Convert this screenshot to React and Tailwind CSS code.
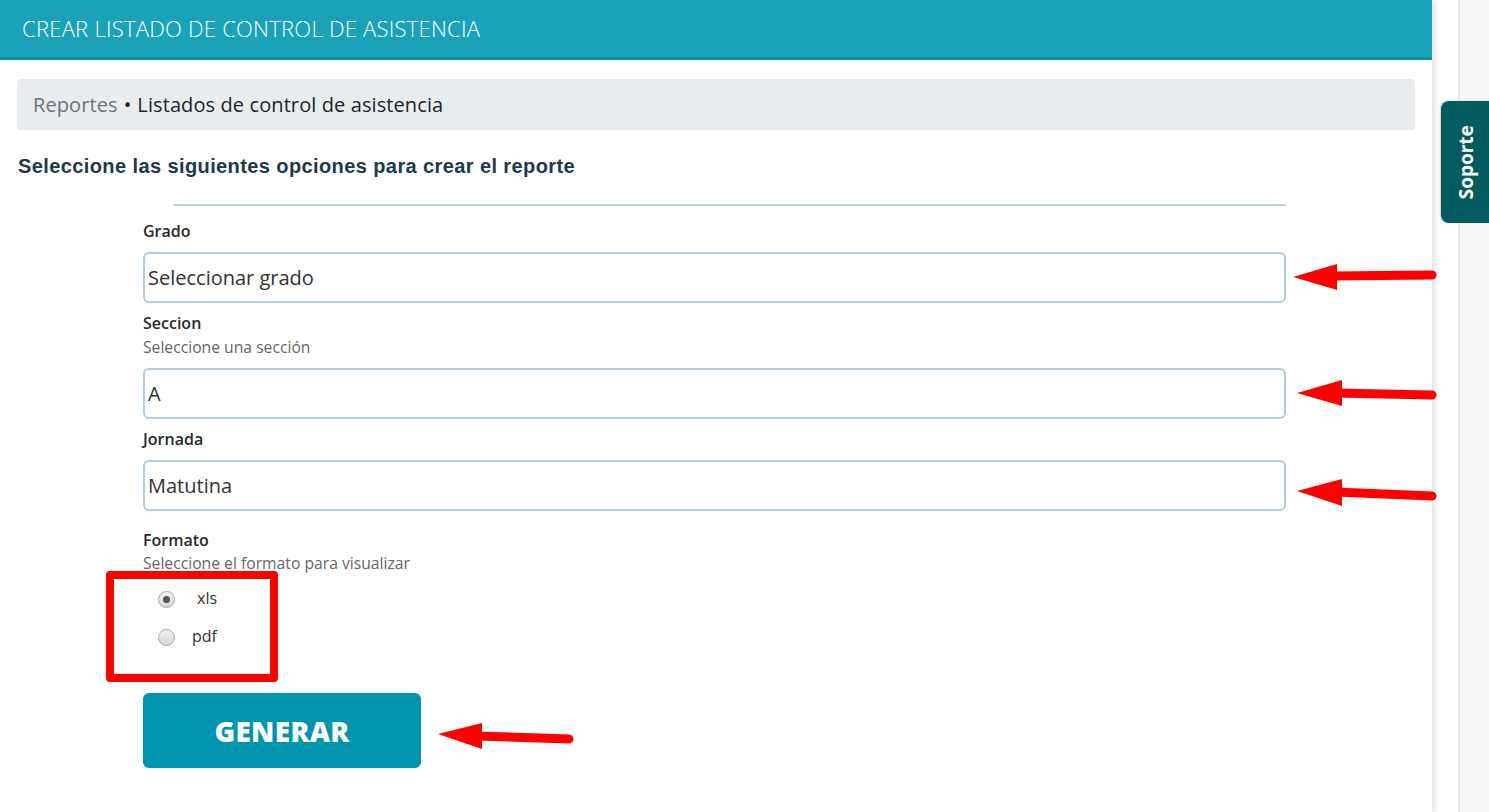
import React from "react";

function Radio({ checked }) {
  return (
    <span className="relative inline-flex h-[17px] w-[17px] items-center justify-center rounded-full border border-[#a8a8a8] bg-gradient-to-b from-[#f4f4f4] to-[#d6d6d6]">
      {checked && <span className="h-[7px] w-[7px] rounded-full bg-[#555]" />}
    </span>
  );
}

function Field({ label, help, value }) {
  return (
    <div className="flex flex-col">
      <div className="text-[16px] font-semibold leading-[20px] text-[#2a2a2a]">{label}</div>
      {help && <div className="mt-[4px] text-[15.7px] leading-[20px] text-[#666]">{help}</div>}
      <div className="mt-[11px] flex h-[51px] items-center rounded-[6px] border-2 border-[#acd0e5] px-[3px] text-[20px] text-[#333]">
        {value}
      </div>
    </div>
  );
}

export default function App() {
  return (
    <div className="relative flex h-[812px] w-[1489px] overflow-hidden bg-white" style={{ fontFamily: "'Open Sans', Lato, sans-serif" }}>
      <div className="relative z-10 flex w-[1432px] flex-col bg-white shadow-[3px_0_6px_rgba(0,0,0,0.12)]">
        <div className="flex h-[60px] items-center border-b-[3px] border-[#168b9d] bg-[#1aa3b8] px-[22px]">
          <span className="text-[22px] font-light tracking-[0.25px] text-white">CREAR LISTADO DE CONTROL DE ASISTENCIA</span>
        </div>
        <div className="px-[17px] pt-[19px]">
          <div className="flex h-[51px] items-center rounded-[4px] bg-[#e9ecef] px-[16px] text-[20px] tracking-[0.1px]">
            <span className="text-[#6c757d]">Reportes</span>
            <span className="mx-[6px] text-[#212529]">•</span>
            <span className="text-[#212529]">Listados de control de asistencia</span>
          </div>
        </div>
        <div className="mt-[21px] px-[18px] text-[20px] font-bold tracking-[0.4px] text-[#1b3a4b]" style={{ fontFamily: "'Liberation Sans', Arial, sans-serif" }}>
          Seleccione las siguientes opciones para crear el reporte
        </div>
        <div className="ml-[173px] mt-[23px] h-[2px] w-[1113px] bg-[#b7d6e8]" />
        <div className="ml-[143px] mt-[15px] flex w-[1143px] flex-col gap-[10px]">
          <Field label="Grado" value="Seleccionar grado" />
          <Field label="Seccion" help="Seleccione una sección" value="A" />
          <Field label="Jornada" value="Matutina" />
        </div>
        <div className="ml-[143px] mt-[19px] flex flex-col">
          <div className="text-[16px] font-semibold leading-[20px] text-[#2a2a2a]">Formato</div>
          <div className="mt-[4px] text-[15.7px] leading-[18px] text-[#666]">Seleccione el formato para visualizar</div>
        </div>
        <div className="ml-[106px] -mt-[1px] flex h-[111px] w-[172px] flex-col rounded-[4px] border-[8px] border-[#ff0000] pl-[44px] pt-[10px]">
          <div className="flex h-[20px] items-center gap-[22px] text-[16px] text-[#333]">
            <Radio checked />
            <span className="-mt-[3px]">xls</span>
          </div>
          <div className="mt-[18px] flex h-[20px] items-center gap-[17px] text-[16px] text-[#333]">
            <Radio />
            <span className="-mt-[3px]">pdf</span>
          </div>
        </div>
        <div className="ml-[143px] mt-[11px] flex h-[75px] w-[278px] items-center justify-center rounded-[6px] bg-[#0095ae] text-[28px] font-extrabold tracking-[0.3px] text-white">
          GENERAR
        </div>
      </div>
      <div className="w-[26px] bg-white" />
      <div className="flex-1 border-l-2 border-[#e7eaee] bg-[#f7f7f7]" />
      <div className="absolute left-[1441px] top-[101px] z-20 flex h-[122px] w-[50px] items-center justify-center rounded-l-[8px] bg-[#055c5e] shadow-[-1px_0_2px_rgba(0,0,0,0.2)]">
        <span className="-rotate-90 whitespace-nowrap text-[19px] font-bold text-white">Soporte</span>
      </div>
      <svg className="pointer-events-none absolute left-0 top-0 z-30" width="1489" height="812">
        <g fill="#ff0000" stroke="#ff0000" strokeLinecap="round">
          <line x1="1331" y1="276" x2="1432" y2="275" strokeWidth="9" />
          <polygon points="1293,277 1337,264 1337,290" strokeWidth="0" />
          <line x1="1335" y1="393" x2="1432" y2="395" strokeWidth="9" />
          <polygon points="1297,393 1342,380 1342,406" strokeWidth="0" />
          <line x1="1335" y1="492" x2="1432" y2="496" strokeWidth="9" />
          <polygon points="1297,491 1342,479 1342,506" strokeWidth="0" />
          <line x1="476" y1="736" x2="569" y2="739" strokeWidth="9" />
          <polygon points="438,734 482,723 482,749" strokeWidth="0" />
        </g>
      </svg>
    </div>
  );
}
